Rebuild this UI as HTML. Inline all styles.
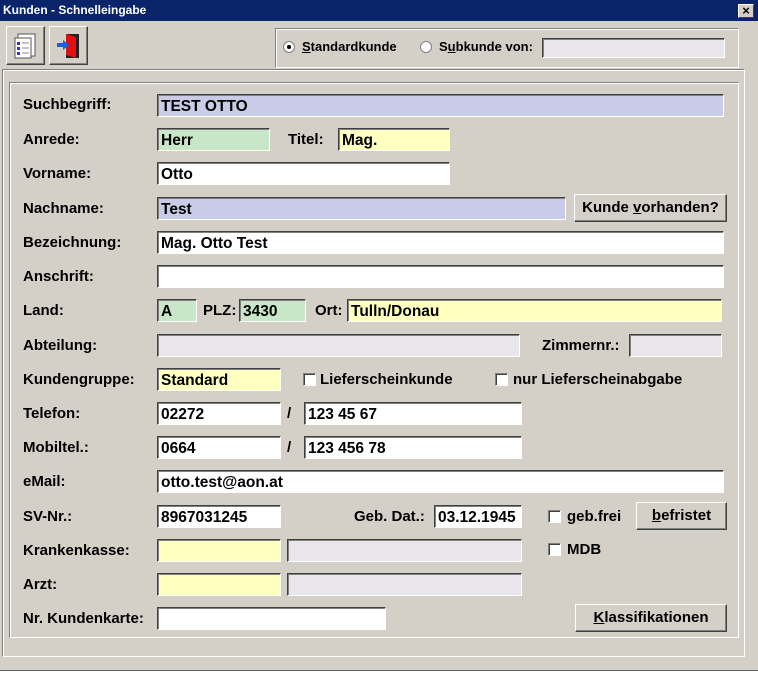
<!DOCTYPE html>
<html><head><meta charset="utf-8"><style>
*{box-sizing:border-box}
body{margin:0;width:758px;height:675px;background:#d4d0c8;font-family:"Liberation Sans",Arial,sans-serif;font-size:14px;color:#000;position:relative;overflow:hidden}
.a{position:absolute}
.title{left:0;top:0;width:758px;height:21px;background:#0a246a;color:#fff;font-weight:bold;font-size:12px;line-height:21px;padding-left:3px}
.x{right:4px;top:4px;width:16px;height:14px;background:#d4d0c8;border:1px solid;border-color:#fff #404040 #404040 #fff;color:#000;font-size:13px;line-height:11px;text-align:center;font-weight:bold}
.btn{background:#d4d0c8;border:1px solid;border-color:#fff #404040 #404040 #fff;box-shadow:inset -1px -1px 0 #808080;text-align:center;line-height:26px;font-size:15px}
.frame{border:1px solid;border-color:#808080 #fff #fff #808080;box-shadow:inset 1px 1px 0 #fff,1px 1px 0 #808080 inset}
.f{height:23px;border:1px solid;border-color:#404040 #fff #fff #404040;box-shadow:inset 1px 1px 0 #808080;background:#fff;padding:2px 0 0 3px;line-height:20px;font-weight:bold;font-size:15.5px;white-space:nowrap;overflow:hidden}
.lav{background:#c8cce6}.grn{background:#c8e6c8}.yel{background:#ffffc0}.dis{background:#e8e6ea}
.l{font-size:15px;font-weight:bold;margin-top:0px;white-space:nowrap}
.cb{width:13px;height:13px;background:#fff;border:1px solid;border-color:#808080 #fff #fff #808080;box-shadow:inset 1px 1px 0 #404040}
</style></head><body>
<div class="a title">Kunden - Schnelleingabe</div>
<div class="a x">×</div>
<div class="a btn" style="left:6px;top:26px;width:39px;height:39px">
<svg width="30" height="30" viewBox="0 0 30 30" style="margin-top:4px"><rect x="7" y="3" width="17" height="22" fill="#fff" stroke="#555"/><rect x="4" y="7" width="16" height="20" fill="#fff" stroke="#555"/><rect x="6" y="11" width="3" height="3" fill="#33c"/><rect x="6" y="16" width="3" height="3" fill="#33c"/><rect x="6" y="21" width="3" height="3" fill="#33c"/><path d="M11 12h7M11 17h7M11 22h7" stroke="#888"/></svg></div>
<div class="a btn" style="left:49px;top:26px;width:39px;height:39px">
<svg width="30" height="30" viewBox="0 0 30 30" style="margin-top:4px"><rect x="12" y="3" width="13" height="24" fill="#222"/><path d="M12 3L22 6V27L12 24Z" fill="#e01010"/><path d="M3 12h6v-3l6 5-6 5v-3H3z" fill="#1a5ee0"/></svg></div>
<div class="a frame" style="left:275px;top:28px;width:464px;height:40px"></div>
<div class="a" style="left:283px;top:41px;width:12px;height:12px;border-radius:50%;background:#fff;border:1px solid #808080"><div style="width:4px;height:4px;background:#000;border-radius:50%;margin:3px"></div></div>
<div class="a" style="left:302px;top:39px;font-weight:bold;font-size:13px"><u>S</u>tandardkunde</div>
<div class="a" style="left:420px;top:41px;width:12px;height:12px;border-radius:50%;background:#fff;border:1px solid #808080"></div>
<div class="a" style="left:439px;top:39px;font-weight:bold;font-size:13px">S<u>u</u>bkunde von:</div>
<div class="a f dis" style="left:542px;top:38px;width:183px;height:20px"></div>
<div class="a frame" style="left:2px;top:69px;width:743px;height:588px"></div>
<div class="a frame" style="left:9px;top:82px;width:730px;height:556px"></div>
<div class="a" style="left:0;top:670px;width:758px;height:1px;background:#606060"></div>
<div class="a" style="left:0;top:671px;width:758px;height:4px;background:#fff"></div>

<div class="a l" style="left:23px;top:96px">Suchbegriff:</div><div class="a f lav" style="left:157px;top:94px;width:567px">TEST OTTO</div>
<div class="a l" style="left:23px;top:131px">Anrede:</div><div class="a f grn" style="left:157px;top:128px;width:113px">Herr</div>
<div class="a l" style="left:288px;top:131px">Titel:</div><div class="a f yel" style="left:338px;top:128px;width:112px">Mag.</div>
<div class="a l" style="left:23px;top:165px">Vorname:</div><div class="a f" style="left:157px;top:162px;width:293px">Otto</div>
<div class="a l" style="left:23px;top:200px">Nachname:</div><div class="a f lav" style="left:157px;top:197px;width:409px">Test</div>
<div class="a btn" style="left:574px;top:194px;width:153px;height:28px;font-weight:bold">Kunde <u>v</u>orhanden?</div>
<div class="a l" style="left:23px;top:234px">Bezeichnung:</div><div class="a f" style="left:157px;top:231px;width:567px">Mag. Otto Test</div>
<div class="a l" style="left:23px;top:268px">Anschrift:</div><div class="a f" style="left:157px;top:265px;width:567px"></div>
<div class="a l" style="left:23px;top:302px">Land:</div><div class="a f grn" style="left:157px;top:299px;width:40px">A</div>
<div class="a l" style="left:203px;top:302px">PLZ:</div><div class="a f grn" style="left:239px;top:299px;width:67px">3430</div>
<div class="a l" style="left:315px;top:302px">Ort:</div><div class="a f yel" style="left:347px;top:299px;width:375px">Tulln/Donau</div>
<div class="a l" style="left:23px;top:337px">Abteilung:</div><div class="a f dis" style="left:157px;top:334px;width:363px"></div>
<div class="a l" style="left:542px;top:337px">Zimmernr.:</div><div class="a f dis" style="left:629px;top:334px;width:93px"></div>
<div class="a l" style="left:23px;top:371px">Kundengruppe:</div><div class="a f yel" style="left:157px;top:368px;width:124px">Standard</div>
<div class="a cb" style="left:303px;top:373px"></div><div class="a l" style="left:320px;top:371px">Lieferscheinkunde</div>
<div class="a cb" style="left:495px;top:373px"></div><div class="a l" style="left:513px;top:371px">nur Lieferscheinabgabe</div>
<div class="a l" style="left:23px;top:405px">Telefon:</div><div class="a f" style="left:157px;top:402px;width:124px">02272</div>
<div class="a l" style="left:287px;top:405px">/</div><div class="a f" style="left:304px;top:402px;width:218px">123 45 67</div>
<div class="a l" style="left:23px;top:439px">Mobiltel.:</div><div class="a f" style="left:157px;top:436px;width:124px">0664</div>
<div class="a l" style="left:287px;top:439px">/</div><div class="a f" style="left:304px;top:436px;width:218px">123 456 78</div>
<div class="a l" style="left:23px;top:473px">eMail:</div><div class="a f" style="left:157px;top:470px;width:567px">otto.test@aon.at</div>
<div class="a l" style="left:23px;top:508px">SV-Nr.:</div><div class="a f" style="left:157px;top:505px;width:124px">8967031245</div>
<div class="a l" style="left:354px;top:508px">Geb. Dat.:</div><div class="a f" style="left:434px;top:505px;width:88px">03.12.1945</div>
<div class="a cb" style="left:548px;top:510px"></div><div class="a l" style="left:567px;top:508px">geb.frei</div>
<div class="a btn" style="left:636px;top:502px;width:91px;height:28px;font-weight:bold"><u>b</u>efristet</div>
<div class="a l" style="left:23px;top:542px">Krankenkasse:</div><div class="a f yel" style="left:157px;top:539px;width:124px"></div><div class="a f dis" style="left:287px;top:539px;width:235px"></div>
<div class="a cb" style="left:548px;top:543px"></div><div class="a l" style="left:567px;top:541px">MDB</div>
<div class="a l" style="left:23px;top:576px">Arzt:</div><div class="a f yel" style="left:157px;top:573px;width:124px"></div><div class="a f dis" style="left:287px;top:573px;width:235px"></div>
<div class="a l" style="left:23px;top:610px">Nr. Kundenkarte:</div><div class="a f" style="left:157px;top:607px;width:229px"></div>
<div class="a btn" style="left:575px;top:604px;width:152px;height:28px;font-weight:bold"><u>K</u>lassifikationen</div>
</body></html>
